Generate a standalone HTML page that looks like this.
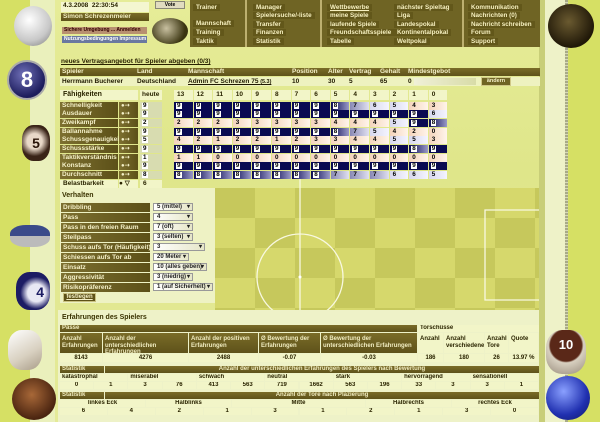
<!DOCTYPE html><html><head><meta charset="utf-8"><style>
*{margin:0;padding:0;box-sizing:border-box}
body{width:600px;height:422px;overflow:hidden;position:relative;font-family:"Liberation Sans",sans-serif;font-weight:bold;font-size:6.5px;background:#d6e064}
.a{position:absolute}
.d{background:linear-gradient(#7a6c28,#5e521a);color:#f0ecc0}
.l{background:linear-gradient(90deg,#7d7030,#5c5018);color:#f4f0c8;padding-left:2px;line-height:8px;height:8px}
.p{background:#f2f5c8;color:#2a2400}
.t{line-height:8px;white-space:nowrap}
.ball{position:absolute;border-radius:50%}
.m div{position:absolute;color:#f6f0c0;white-space:nowrap;font-size:6.3px;background:rgba(90,78,20,.6);padding:0 3px;line-height:7px}
.c{position:absolute;height:8px;line-height:8px;font-size:6.3px;padding-left:2px}
.n{display:inline-block;background:#fff;color:#000;padding:0 1px;line-height:6px;margin-top:1px;vertical-align:top}
.sel{position:absolute;height:8px;background:linear-gradient(90deg,#fff,#e6e6c8);border:1px solid #999;font-size:6px;line-height:6px;padding-left:3px;color:#222}
.sel:after{content:"▾";position:absolute;right:2px;top:0;font-size:6px}
</style></head><body>
<div class="a" style="left:30px;top:0;width:25px;height:422px;background:#eaf0bc"></div>
<div class="a" style="left:545px;top:0;width:22px;height:422px;background:#eef2c8"></div>
<div class="a" style="left:565px;top:0;width:3px;height:422px;background:repeating-linear-gradient(#a8aa88 0 2px,#d8dab8 2px 3px)"></div>
<div class="a" style="left:539px;top:0;width:6px;height:422px;background:#c8ce78"></div>
<div class="a" style="left:55px;top:0;width:484px;height:422px;background:linear-gradient(#e6ec98,#dfe68a 40%,#e4ea98)"></div>
<div class="a" style="left:215px;top:188px;width:324px;height:122px;background:repeating-conic-gradient(#d6d86c 0 25%,#c6c85c 0 50%) 0 0/80px 60px"></div>
<svg class="a" style="left:215px;top:178px" width="324" height="134"><g stroke="#f8f8e0" fill="none" stroke-width="1.3"><line x1="85" y1="0" x2="85" y2="134"/><circle cx="85" cy="99" r="43"/><polyline points="324,32 270,32 270,122 324,122"/></g><circle cx="85" cy="99" r="1.5" fill="#fff"/></svg>
<div class="ball" style="left:14px;top:6px;width:38px;height:40px;background:radial-gradient(circle at 40% 35%,#fff,#c8c8c8 60%,#777)"></div>
<div class="ball" style="left:7px;top:60px;width:40px;height:40px;background:radial-gradient(circle at 40% 35%,#7070b8,#1c1c5c 70%);border:2px solid #aaa"><div style="color:#fff;font-size:22px;text-align:center;line-height:36px">8</div></div>
<div class="ball" style="left:22px;top:125px;width:28px;height:36px;border-radius:40%;background:radial-gradient(circle at 45% 45%,#e8d8c8 30%,#3a2418 60%)"><div style="color:#2a1408;font-size:14px;text-align:center;line-height:36px">5</div></div>
<div class="ball" style="left:10px;top:225px;width:40px;height:22px;border-radius:40%;background:linear-gradient(#3a4a8a 50%,#bbb 50%)"></div>
<div class="ball" style="left:16px;top:272px;width:34px;height:38px;border-radius:40%;background:radial-gradient(circle at 60% 55%,#e8e8f4 30%,#1c1c64 55%)"><div style="color:#1c1c64;font-size:14px;text-align:right;padding-right:6px;line-height:40px">4</div></div>
<div class="ball" style="left:8px;top:330px;width:34px;height:40px;border-radius:40%;background:linear-gradient(150deg,#fff,#d8d0c0 60%,#a89c88)"></div>
<div class="ball" style="left:12px;top:378px;width:44px;height:42px;background:radial-gradient(circle at 45% 40%,#a86838,#4a2410 70%)"></div>
<div class="ball" style="left:548px;top:4px;width:46px;height:44px;background:radial-gradient(circle at 45% 40%,#6a5a30,#201808 70%)"></div>
<div class="ball" style="left:546px;top:330px;width:40px;height:44px;border-radius:40%;background:radial-gradient(circle at 50% 35%,#5a2818 45%,#d8d0c0 50%,#988c7c)"><div style="color:#fff;font-size:13px;text-align:center;line-height:30px">10</div></div>
<div class="ball" style="left:546px;top:376px;width:44px;height:44px;background:radial-gradient(circle at 40% 35%,#8aa0ff,#2030b0 60%,#101860)"></div>
<div class="a p t" style="left:61px;top:2px;width:88px;height:10px;background:#f4f6d0;padding-left:2px">4.3.2008 &nbsp;22:30:54</div>
<div class="a d t" style="left:61px;top:13px;width:88px;height:8px;padding-left:2px">Simon Schrezenmeier</div>
<div class="a t" style="left:62px;top:27px;width:85px;height:7px;background:#b89070;color:#300;font-size:5px;line-height:7px;padding-left:2px">Sichere Umgebung ... Anmelden</div>
<div class="a t" style="left:62px;top:36px;width:85px;height:7px;background:#6a78a0;color:#fff;font-size:5px;line-height:7px;padding-left:2px">Nutzungsbedingungen Impressum</div>
<div class="a" style="left:155px;top:1px;width:30px;height:8px;background:#e0dcc0;border:1px solid #887;font-size:5px;text-align:center;line-height:6px">Vote</div>
<div class="a" style="left:152px;top:18px;width:36px;height:26px;border-radius:50%;background:radial-gradient(circle at 40% 40%,#c8c0a0,#3a3410 70%)"></div>
<div class="a" style="left:190px;top:0;width:350px;height:47px;background:#6f6424"></div>
<div class="a" style="left:245px;top:0;width:2px;height:47px;background:#bdb070"></div>
<div class="a" style="left:320px;top:0;width:2px;height:47px;background:#bdb070"></div>
<div class="a" style="left:462px;top:0;width:2px;height:47px;background:#bdb070"></div>
<div class="m">
<div style="left:193px;top:4px">Trainer</div><div style="left:193px;top:20px">Mannschaft</div><div style="left:193px;top:29px">Training</div><div style="left:193px;top:38px">Taktik</div>
<div style="left:253px;top:4px">Manager</div><div style="left:253px;top:12px">Spielersuche/-liste</div><div style="left:253px;top:21px">Transfer</div><div style="left:253px;top:29px">Finanzen</div><div style="left:253px;top:38px">Statistik</div>
<div style="left:327px;top:4px;text-decoration:underline">Wettbewerbe</div><div style="left:327px;top:12px">meine Spiele</div><div style="left:327px;top:21px">laufende Spiele</div><div style="left:327px;top:29px">Freundschaftsspiele</div><div style="left:327px;top:38px">Tabelle</div>
<div style="left:394px;top:4px">nächster Spieltag</div><div style="left:394px;top:12px">Liga</div><div style="left:394px;top:21px">Landespokal</div><div style="left:394px;top:29px">Kontinentalpokal</div><div style="left:394px;top:38px">Weltpokal</div>
<div style="left:468px;top:4px">Kommunikation</div><div style="left:468px;top:12px">Nachrichten (0)</div><div style="left:468px;top:21px">Nachricht schreiben</div><div style="left:468px;top:29px">Forum</div><div style="left:468px;top:38px">Support</div>
</div>
<div class="a t" style="left:61px;top:58px;color:#2a2200;text-decoration:underline">neues Vertragsangebot für Spieler abgeben (0/3)</div>
<div class="a d" style="left:60px;top:68px;width:480px;height:8px"></div>
<div class="a t" style="left:0;top:68px;color:#f4f0c8;width:600px">
<span class="a" style="left:62px">Spieler</span><span class="a" style="left:137px">Land</span><span class="a" style="left:188px">Mannschaft</span><span class="a" style="left:292px">Position</span><span class="a" style="left:328px">Alter</span><span class="a" style="left:349px">Vertrag</span><span class="a" style="left:380px">Gehalt</span><span class="a" style="left:408px">Mindestgebot</span></div>
<div class="a" style="left:60px;top:77px;width:480px;height:9px;background:#eef2c0"></div>
<div class="a t" style="left:0;top:77px;color:#201a00;width:600px;line-height:9px">
<span class="a" style="left:62px">Herrmann Bucherer</span><span class="a" style="left:137px">Deutschland</span><span class="a" style="left:188px;text-decoration:underline">Admin FC Schrezen 75 <small>(5.3)</small></span><span class="a" style="left:292px">10</span><span class="a" style="left:328px">30</span><span class="a" style="left:349px">5</span><span class="a" style="left:380px">65</span><span class="a" style="left:408px">0</span></div>
<div class="a" style="left:414px;top:78px;width:62px;height:7px;background:linear-gradient(90deg,#f0f0d8,#d8dca8)"></div>
<div class="a" style="left:481px;top:77px;width:30px;height:9px;background:#6f6424;border:1px solid #d0c888;color:#f4f0c8;font-size:5.5px;text-align:center;line-height:7px">ändern</div>
<div class="a" style="left:60px;top:188px;width:155px;height:115px;background:#eef2c4"></div>
<div class="a t" style="left:62px;top:191px;color:#3a3200;font-size:7px;line-height:10px">Verhalten</div>
<div class="a" style="left:63px;top:293px;width:33px;height:9px;background:#5e5218;border:1px solid #c8c080;color:#f4f0c8;font-size:6px;line-height:7px;text-align:center;text-decoration:underline">festlegen</div>
<div class="a" style="left:58px;top:310px;width:481px;height:112px;background:#eef2c8"></div>
<div class="a t" style="left:62px;top:313px;color:#3a3200;font-size:7px;line-height:9px">Erfahrungen des Spielers</div>
<script>
function A(h){document.body.insertAdjacentHTML('beforeend',h)}
var rows=[["Schnelligkeit",9,[9,9,9,9,9,9,9,9,8,7,6,5,4,3]],["Ausdauer",9,[9,9,9,9,9,9,9,9,9,9,9,9,9,6]],["Zweikampf",2,[2,2,2,3,3,3,3,3,4,4,4,5,9,8]],["Ballannahme",9,[9,9,9,9,9,9,9,9,8,7,5,4,2,0]],["Schussgenauigkeit",5,[4,2,1,2,2,1,2,3,3,4,4,5,5,3]],["Schussstärke",9,[9,9,9,9,9,9,9,9,9,9,9,9,8,9]],["Taktikverständnis",1,[1,1,0,0,0,0,0,0,0,0,0,0,0,0]],["Konstanz",9,[9,9,9,9,9,9,9,9,9,9,9,9,9,9]],["Durchschnitt",8,[8,8,8,8,8,8,8,8,7,7,7,6,6,5]]];
function col(v){if(v==9)return"#0a0a52";if(v==8)return"linear-gradient(90deg,#0a0a52,#9a9ac8)";if(v==7)return"linear-gradient(90deg,#8888b4,#e0e0f0)";if(v>=5)return"linear-gradient(90deg,#d8d8ee,#f4f4ff)";return"linear-gradient(90deg,#f4d4bc,#fff4ea)"}
var h="",y=90,W=19.6,X0=174;
h+='<div class="a p t" style="left:60px;top:'+y+'px;width:78px;height:10px;padding-left:3px;line-height:10px;font-size:7px">Fähigkeiten</div>';
h+='<div class="a p t" style="left:140px;top:'+y+'px;width:22px;height:10px;padding-left:2px;line-height:10px">heute</div>';
var lab=[13,12,11,10,9,8,7,6,5,4,3,2,1,0];
for(var i=0;i<14;i++)h+='<div class="a p t" style="left:'+(X0+i*W)+'px;top:'+y+'px;width:'+(W-1)+'px;height:10px;padding-left:3px;line-height:10px">'+lab[i]+'</div>';
y=101.5;
rows.forEach(function(r,k){var yy=(y+k*8.7).toFixed(1);
h+='<div class="a l t" style="left:60px;top:'+yy+'px;width:58px">'+r[0]+'</div>';
h+='<div class="a l" style="left:119px;top:'+yy+'px;width:19px;font-size:6px">●⇢</div>';
h+='<div class="c" style="left:140px;top:'+yy+'px;width:22px;background:#d8dcb0"><span class="n">'+r[1]+'</span></div>';
r[2].forEach(function(v,i){h+='<div class="c" style="left:'+(X0+i*W).toFixed(1)+'px;top:'+yy+'px;width:'+(W-1)+'px;background:'+col(v)+'"><span class="n" style="'+(v<8?'background:none':'')+'">'+v+'</span></div>'})});
var yb=(y+9*8.7).toFixed(1);
h+='<div class="a p t" style="left:60px;top:'+yb+'px;width:58px;padding-left:3px">Belastbarkeit</div><div class="a p t" style="left:119px;top:'+yb+'px;width:19px">● ▽</div><div class="a p t" style="left:140px;top:'+yb+'px;width:22px;padding-left:3px">6</div>';
A(h);
var vr=[["Dribbling","5 (mittel)",40],["Pass","4",40],["Pass in den freien Raum","7 (oft)",40],["Steilpass","3 (selten)",40],["Schuss aufs Tor (Häufigkeit)","3",52],["Schiessen aufs Tor ab","20 Meter",36],["Einsatz","10 (alles geben)",54],["Aggressivität","3 (niedrig)",40],["Risikopräferenz","1 (auf Sicherheit)",60]];
h="";vr.forEach(function(r,k){var yy=203+k*10;h+='<div class="a l t" style="left:61px;top:'+yy+'px;width:89px;height:9px;line-height:9px">'+r[0]+'</div><div class="sel" style="left:153px;top:'+(yy)+'px;width:'+r[2]+'px">'+r[1]+'</div>'});A(h);
h="";function cell(x,y,w,hh,t,cls,al){h+='<div class="a '+cls+'" style="left:'+x+'px;top:'+y+'px;width:'+w+'px;height:'+hh+'px;padding:0 2px;line-height:'+(hh>10?'6.5px;padding-top:3px':hh+'px')+';text-align:'+(al||'left')+';font-size:6px;overflow:hidden">'+t+'</div>'}
cell(60,325,357,7,"Pässe","d");cell(418,325,121,7,"Torschüsse","p");
var px=[60,103,189,259,321,418,444,485,509,539];
var ht=["Anzahl Erfahrungen","Anzahl der unterschiedlichen Erfahrungen","Anzahl der positiven Erfahrungen","Ø Bewertung der Erfahrungen","Ø Bewertung der unterschiedlichen Erfahrungen","Anzahl","Anzahl verschiedene","Anzahl Tore","Quote"];
var dv=["8143","4276","2488","-0.07","-0.03","186","180","26","13.97 %"];
for(var i=0;i<9;i++){var w=px[i+1]-px[i]-1;cell(px[i],333,w,20,ht[i],i<5?"d":"p");cell(px[i],354,w,8,dv[i],"p","center")}
cell(60,366,44,7,"Statistik","d");cell(105,366,434,7,"Anzahl der unterschiedlichen Erfahrungen des Spielers nach Bewertung","d","center");
var sl=["katastrophal","miserabel","schwach","neutral","stark","hervorragend","sensationell"];var sv=[0,1,3,76,413,563,719,1662,563,196,33,3,3,1];
var sw=479/7;for(var i=0;i<7;i++)cell(60+i*sw,374,sw-1,7,sl[i],"p");
for(var i=0;i<14;i++)cell(60+i*sw/2,382,sw/2-1,7,sv[i],"p","center");
cell(60,392,44,7,"Statistik","d");cell(105,392,434,7,"Anzahl der Tore nach Plazierung","d","center");
var tl=["linkes Eck","Halblinks","Mitte","Halbrechts","rechtes Eck"],tw=[86,86,134,86,87];
var x=60;for(var i=0;i<5;i++){cell(x,400,tw[i]-1,7,tl[i],"p","center");x+=tw[i]}
var vw=479/10,tv=[6,4,2,1,3,1,2,1,3,0];for(var i=0;i<10;i++)cell(60+i*vw,408,vw-1,7,tv[i],"p","center");
A(h);
</script>
</body></html>
